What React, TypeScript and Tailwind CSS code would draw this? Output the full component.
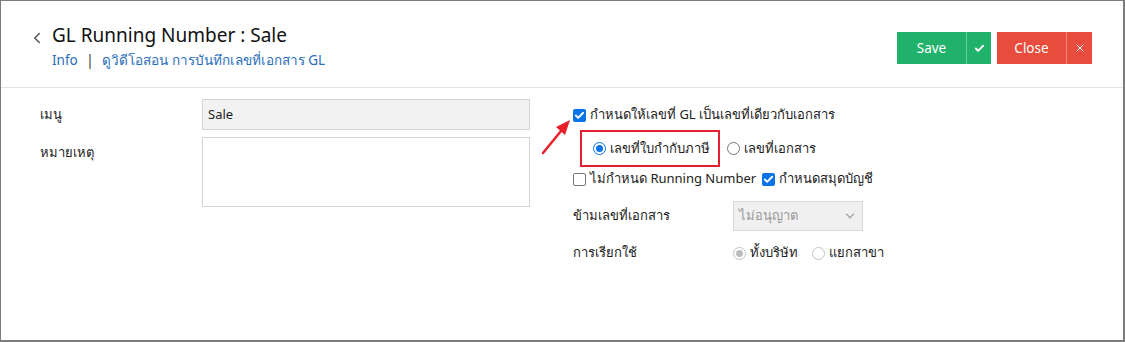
import { ChevronLeft, ChevronDown, Check, X } from "lucide-react";

function Radio({ checked, disabled }: { checked?: boolean; disabled?: boolean }) {
    const ring = disabled ? "border-[#c4c4c4] bg-[#f0f0f0]" : checked ? "border-[#0a74e6]" : "border-[#767676]";
    const dot = disabled ? "bg-[#bdbdbd]" : "bg-[#0a74e6]";
    return (
        <span className={`flex items-center justify-center w-[13px] h-[13px] rounded-full border bg-white ${ring}`}>
            {checked && <span className={`w-[7px] h-[7px] rounded-full ${dot}`} />}
        </span>
    );
}

function CheckBox({ checked }: { checked?: boolean }) {
    return checked ? (
        <span className="flex items-center justify-center w-[13px] h-[13px] rounded-[2px] bg-[#0a74e6]">
            <Check size={11} strokeWidth={4} className="text-white" />
        </span>
    ) : (
        <span className="w-[13px] h-[13px] rounded-[2px] border border-[#767676] bg-white" />
    );
}

export default function App() {
    return (
        <div
            className="w-[1125px] h-[342px] bg-white border-l border-t border-r-2 border-b-2 border-[#7d7d7d] text-[#222] text-[13px]"
            style={{ fontFamily: '"Noto Sans", "Open Sans", sans-serif' }}
        >
            <div className="flex justify-between pl-[27px] pr-[31px] pt-[21px] h-[87px] border-b border-[#e3e3e3]">
                <div className="flex gap-[6px]">
                    <ChevronLeft size={18} strokeWidth={2} className="text-[#555] mt-[7px]" />
                    <div className="flex flex-col">
                        <div className="text-[19px] leading-[27px] text-[#111]">GL Running Number : Sale</div>
                        <div className="text-[13.5px] leading-[20px] text-[#2a6ebd] mt-[1px]">
                            Info <span className="mx-[5px] text-[#333]">|</span> ดูวิดีโอสอน การบันทึกเลขที่เอกสาร GL
                        </div>
                    </div>
                </div>
                <div className="flex gap-[6px] mt-[10px] h-[32px] text-white text-[13.5px]">
                    <div className="flex">
                        <div className="w-[69px] flex items-center justify-center bg-[#20b16a]">Save</div>
                        <div className="w-[25px] flex items-center justify-center bg-[#20b16a] border-l border-[#5fd396]">
                            <Check size={11} strokeWidth={4} />
                        </div>
                    </div>
                    <div className="flex">
                        <div className="w-[69px] flex items-center justify-center bg-[#e74c3c]">Close</div>
                        <div className="w-[26px] flex items-center justify-center bg-[#e74c3c] border-l border-[#f08a80]">
                            <X size={12} strokeWidth={2} />
                        </div>
                    </div>
                </div>
            </div>

            <div className="flex items-start pt-[11px]">
                <div className="grid grid-cols-[162px_328px] content-start gap-y-[7px] pl-[39px] w-[530px]">
                    <div className="pt-[6px]">เมนู</div>
                    <div className="h-[31px] bg-[#f2f2f2] border border-[#d4d4d4] px-[5px] flex items-center">Sale</div>
                    <div className="pt-[6px]">หมายเหตุ</div>
                    <div className="h-[70px] border border-[#d4d4d4]" />
                </div>

                <div className="relative flex flex-col pl-[42px] pt-[8px]">
                    <svg className="absolute left-[8px] top-[18px]" width="36" height="40" viewBox="0 0 36 40">
                        <line x1="4" y1="36" x2="22" y2="14" stroke="#e8202a" strokeWidth="2.5" strokeLinecap="round" />
                        <polygon points="31,3 17,10 26,18" fill="#e8202a" />
                    </svg>
                    <label className="flex items-center gap-[4px] h-[16px]">
                        <CheckBox checked />
                        <span>กำหนดให้เลขที่ GL เป็นเลขที่เดียวกับเอกสาร</span>
                    </label>
                    <div className="flex items-center mt-[7px] h-[37px]">
                        <div className="flex items-center gap-[4px] h-[37px] ml-[7px] pl-[11px] w-[140px] border-2 border-[#e3202d]">
                            <Radio checked />
                            <span>เลขที่ใบกำกับภาษี</span>
                        </div>
                        <div className="flex items-center gap-[4px] ml-[7px]">
                            <Radio />
                            <span>เลขที่เอกสาร</span>
                        </div>
                    </div>
                    <div className="flex items-center mt-[2px] h-[20px]">
                        <label className="flex items-center gap-[4px]">
                            <CheckBox />
                            <span>ไม่กำหนด Running Number</span>
                        </label>
                        <label className="flex items-center gap-[4px] ml-[6px]">
                            <CheckBox checked />
                            <span>กำหนดสมุดบัญชี</span>
                        </label>
                    </div>
                    <div className="flex items-center mt-[12px]">
                        <span className="w-[160px]">ข้ามเลขที่เอกสาร</span>
                        <div className="w-[130px] h-[30px] bg-[#f0f0f0] border border-[#dadada] flex items-center justify-between px-[5px] text-[#999]">
                            <span>ไม่อนุญาต</span>
                            <ChevronDown size={14} strokeWidth={2.5} className="text-[#aaa]" />
                        </div>
                    </div>
                    <div className="flex items-center mt-[7px] h-[30px]">
                        <span className="w-[160px]">การเรียกใช้</span>
                        <div className="flex items-center gap-[4px]">
                            <Radio checked disabled />
                            <span>ทั้งบริษัท</span>
                        </div>
                        <div className="flex items-center gap-[4px] ml-[14px]">
                            <Radio disabled />
                            <span>แยกสาขา</span>
                        </div>
                    </div>
                </div>
            </div>
        </div>
    );
}
